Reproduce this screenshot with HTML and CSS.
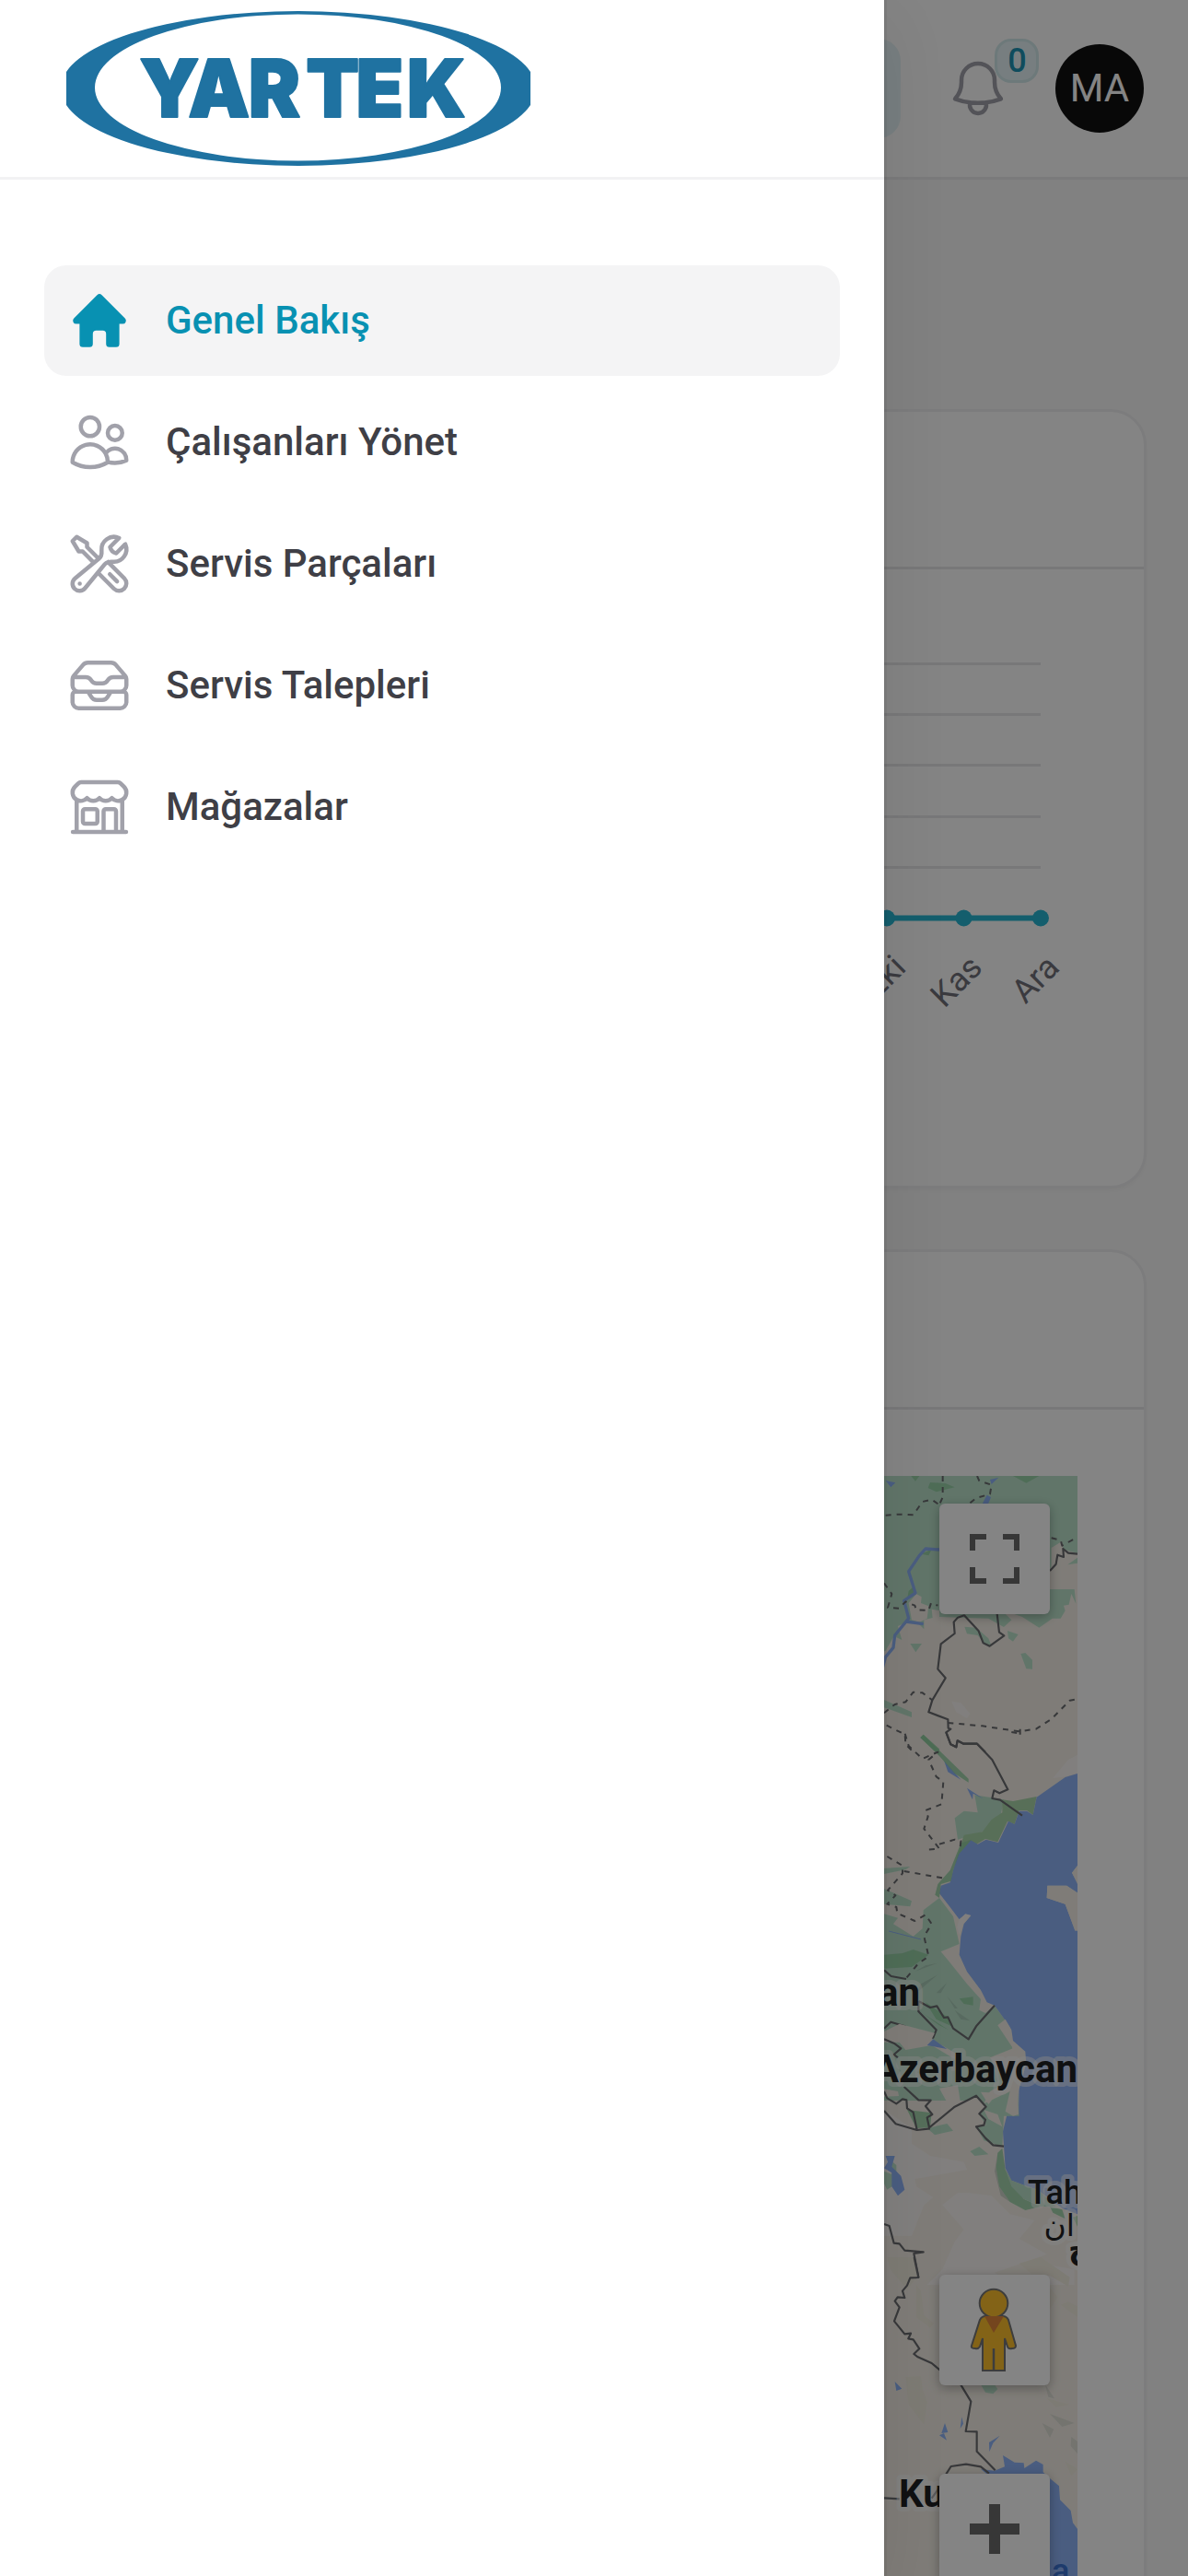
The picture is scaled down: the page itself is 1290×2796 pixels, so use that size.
FILE: index.html
```html
<!DOCTYPE html>
<html lang="tr">
<head>
<meta charset="utf-8">
<title>Yartek</title>
<link rel="stylesheet" href="styles.css">
</head>
<body>
<div class="page">
  <header class="topbar">
    <div class="search"></div>
    <div class="bell">
      <svg class="icon" viewBox="0 0 24 24"><path d="M14.857 17.082a23.848 23.848 0 0 0 5.454-1.31A8.967 8.967 0 0 1 18 9.75V9A6 6 0 0 0 6 9v.75a8.967 8.967 0 0 1-2.312 6.022c1.733.64 3.56 1.085 5.455 1.31m5.714 0a24.255 24.255 0 0 1-5.714 0m5.714 0a3 3 0 1 1-5.714 0"/></svg>
      <span class="badge">0</span>
    </div>
    <div class="avatar">MA</div>
  </header>
  <main class="content">
    <section class="card chart-card">
      <div class="card-head"></div>
      <svg class="chart" viewBox="48 618 1194 669">
        <g class="grid">
          <path d="M200 720.5H1130M200 775.5H1130M200 830.5H1130M200 886.5H1130M200 941.5H1130"/>
        </g>
        <path class="series" d="M200 996.5H1130"/>
        <g class="dots"><circle cx="963" cy="996.5" r="9"/><circle cx="1046.5" cy="996.5" r="9"/><circle cx="1130" cy="996.5" r="9"/></g>
        <g class="months">
          <text transform="translate(985.5 1052) rotate(-45)">Eki</text>
          <text transform="translate(1068.5 1052) rotate(-45)">Kas</text>
          <text transform="translate(1152 1052) rotate(-45)">Ara</text>
        </g>
      </svg>
    </section>
    <section class="card map-card">
      <div class="card-head"></div>
      <div class="map">
        <svg class="map-art" viewBox="120 1602 1050 1200">
          <rect class="land" x="120" y="1602" width="1050" height="1200"/>
          <g transform="translate(940 1500) scale(.33333)">
            <path class="green" d="M0 306H690V558L645 545 638 520 605 540V600L560 690 600 675 680 675 685 722 670 690 662 725 645 728 650 745 635 770 608 770 565 800 510 765 440 740 475 775 450 798 400 770 240 765 240 738 205 725 180 715 205 695 165 690 160 665 210 657 245 670 245 745 215 740 218 768 190 775 190 805 170 785 140 780 105 795 118 840 92 828 65 875 0 900Z"/>
            <path class="land" d="M140 720 165 690 182 700 180 720 205 730 200 770 175 782 150 775Z"/>
            <path class="green" d="M145 852H183L163 880ZM462 810 497 822 480 845 465 835ZM505 885 520 882 543 905V935L523 934ZM322 797 360 800 400 835 410 860 385 850 365 825 330 820ZM658 595 690 572V590ZM60 1035 150 1075V1092L60 1060Z"/>
            <path class="forest" d="M203 345 210 327 260 330 290 343 230 358ZM148 306H175L162 323ZM480 306H565L523 329ZM180 560 215 545 205 565ZM140 680 158 665 165 690 135 708ZM188 1148 240 1195V1215L178 1158Z"/>
            <path class="pale" d="M280 1040 310 1045 340 1080 330 1095 295 1075Z"/>
            <path class="water" d="M65 321 97 328 82 343ZM405 318 433 311 410 333ZM395 368 408 375 398 400 380 397Z"/>
            <path class="river" d="M240 546 195 543 175 565 140 617 162 687 125 712 140 770 95 825 90 865 65 895 55 930M130 780 188 788"/>
            <path class="border" d="M690 560 660 557 643 543 645 570 625 563 620 593 600 615M428 755 435 815 451 826 404 860 383 850 368 811 321 760 300 767 287 782 290 819 245 853 235 935 260 964 217 1036 205 1075 268 1099 269 1127 277 1130 262 1141 277 1180 295 1189 299 1168 319 1178 363 1178 390 1205"/>
            <path class="region" d="M65 434 105 431 155 433 185 390 215 383 240 400M251 306V375L240 400M363 306 370 322 410 335 405 365 360 378 335 398M60 655 85 690 72 735 110 737 130 715 160 728 165 742 205 744 213 720 235 728M605 508 635 515 640 533 690 505M60 1078 95 1050 130 1042 155 1010 185 1012 217 1036M268 1110 380 1120 500 1138 555 1130 605 1098 665 1037 690 1033M503 1130V1150M68 1118 128 1148 130 1180 150 1200"/>
          </g>
          <g transform="translate(940 1880) scale(.33333)">
            <path class="pale" d="M610 150 660 90 690 75V135L650 145Z"/>
            <path class="green" d="M355 205 450 220 440 270 380 325 300 350 290 280 320 257 365 262ZM0 448 145 438 130 448 60 462ZM60 510 150 550 145 568 60 560ZM60 592 105 605 90 625 155 665 185 640 188 580 240 540 285 600 305 690 245 715 270 745 330 820 375 870 370 905 390 915 420 890 470 960 480 1050 520 1080 380 1200 0 1200V592Z"/>
            <path class="meadow" d="M445 220 480 225 557 210 545 270 525 255H500L485 300 462 290 430 358 390 348 345 375 300 400 320 335 380 325 410 285 445 262Z"/>
            <path class="water" d="M690 135 650 147 557 212 545 270 525 257H500L485 300 465 290 432 360 392 350 365 365 342 352 318 380 300 400 285 450 275 490 245 500 240 525 275 570 305 610 325 595 343 597 320 625 310 665 305 725 330 780 375 840 395 880 420 890 470 960 477 1020 510 1055 520 1100H690V1200 645L682 645 650 560 590 540 592 500H655L690 523V490L672 458 690 435ZM255 92 310 155 268 130ZM330 182 385 218 350 200 348 220Z"/>
            <path class="land" d="M690 435 672 458 690 495ZM592 500H655L690 525V647H682L650 560 590 540Z"/>
            <path class="pale" d="M305 610 325 592 343 597 318 625 305 660 298 635Z"/>
            <path class="forest" d="M188 8 240 60 335 152V164L290 135 240 78 178 18ZM345 350 310 362 295 400 275 450 235 495 226 530 240 540 245 495 278 485 285 450 305 395ZM60 725 120 720 155 708 205 725 150 765 60 770ZM195 880 270 930 285 960 230 935ZM305 868 350 862 350 890 320 885Z"/>
            <path class="shade" d="M165 850 235 790 180 820ZM160 780 235 752 195 760ZM230 850 265 815 245 850ZM265 860 300 900 290 900ZM290 905 340 940 310 935Z"/>
            <path class="border" d="M262 0 277 40 295 49 299 28 319 38 363 38 412 90 463 187 436 199 418 190 412 216 438 221 510 272M60 775 83 795 132 804M420 890 360 958 335 1000 285 965 268 928 255 930 232 892 210 897 172 876M172 876V910L230 970 220 995 130 975 128 958 82 944 60 965"/>
            <path class="region" d="M128 5 140 45 185 87 235 65 205 90 230 145 253 162 247 235 195 255 203 275 190 315 240 380 200 383M240 365 290 350 310 355 308 375M70 405 120 435 120 460 72 515 97 532 70 560 100 570 103 590 160 615 195 595 215 625 190 665 205 730 170 755 130 804M125 453 250 475M475 0 503 5"/>
            <path class="stream" d="M75 648 180 675"/>
          </g>
          <g transform="translate(940 2180) scale(.33333)">
            <path class="water" d="M400-60H690V670L640 650 560 590 515 575 475 560 455 520 447 400 462 340 498 348 500 240 490 110 470 60Z"/>
            <path class="land" d="M0 340 60 330 130 375 170 395 210 390 360 283 450 450 430 500 430 560 460 620 530 655 575 650 690 690V1200H0Z"/>
            <path class="pale" d="M60 330 150 390 150 440 210 480 320 500 330 525 160 555 165 580 220 615 190 640 150 740 60 740ZM330 600 410 610 470 670 550 690 500 750 590 800 420 860 480 900H200L250 850 290 760 320 720 250 640 300 600ZM570 830 680 850V900H560Z"/>
            <path class="green" d="M200 390 265 375 285 398 225 412ZM360 283 390 320 370 345 392 380 360 385 385 430 445 450 450 350 500 350 495 270 300 270ZM340 465 370 450 400 475 355 480Z"/>
            <path class="land" d="M60 75 110 50 225 80 215 100 300 150 290 165 215 120 130 135 110 110 60 110ZM430 55 455 35 475 70 480 105 520 140 523 180 495 280 498 345 480 350 455 335 470 270 385 310 405 270 460 240 405 160 480 130ZM240 260 300 250 310 315 280 325 265 305ZM60 262 105 270 108 285 60 287ZM385 330 430 345 445 385 400 360ZM375 272 430 275 400 312Z"/>
            <path class="forest" d="M185 15 270 70 240 55ZM135 330 215 340 210 388 165 390ZM445 455 455 525 475 560 515 620 570 645 520 657 470 630 435 580 425 520 430 470ZM600 645 640 655 650 685 610 665ZM675 680 690 675V710Z"/>
            <path class="green" d="M455 525 475 560 515 575 560 590 620 645 570 645 515 620 475 580ZM60 530 85 540 75 490 100 510 100 570 70 590 60 570Z"/>
            <path class="water" d="M200 120 220 100 265 132ZM65 480H95L85 515 115 545 127 590 105 610 85 580 85 535 60 520 72 500Z"/>
            <path class="shade" d="M430 470 425 520 435 580 470 630 440 610 420 530Z"/>
            <path class="border" d="M60 100 95 115 115 130 92 150 105 160M125 255 172 298 212 299 195 318 217 345 200 355 207 388 290 320 360 284 392 320 370 343 390 362 385 380 360 385 390 422 415 445 450 449M60 270 70 292 100 310 120 295 133 298 135 325 155 338 167 395M60 333 98 376 167 396 210 391M60 702 77 708 92 764 110 766 127 788 188 793 157 798 172 875 145 878 133 900"/>
          </g>
          <g transform="translate(940 2450) scale(.33333)">
            <path class="sand" d="M70 0H155L170 60 135 105 80 40ZM165 90 180 110 190 190 222 215 210 230 165 195ZM130 390 180 388 185 430 200 470 190 545 140 480ZM500 20 570 0 665 65 660 95 600 60 540 55ZM635 155 660 145 690 160V195ZM600 100 625 130 600 170ZM590 460 665 480 620 488ZM650 665 690 690 670 712Z"/>
            <path class="shade faint" d="M600 510 680 540 640 552ZM575 540 613 560 600 588ZM670 585 690 600V640L668 615ZM585 415 615 460 595 455Z"/>
            <path class="green" d="M375 415H420L430 430 415 445 390 440Z"/>
            <path class="water" d="M375 690 420 695 453 682 447 645 485 668 515 670 517 687 555 662 578 675V700L600 720 630 745 633 790 668 825 675 865 690 885V1100H560V710H400ZM95 405 118 428 100 435ZM258 540 268 570 247 573ZM240 580 255 573 264 596ZM313 520 318 542 308 558ZM402 603 437 581 415 605 403 633Z"/>
            <path class="border" d="M158 0 172 66 145 67 135 92 120 110 127 132 104 130 95 143 110 163 93 208 127 250 147 248 139 265 155 268 175 298 157 315 170 325 215 345 245 370M308 412 343 470 326 567 362 568V632L422 694M262 706 278 681 327 674 375 682 402 704M60 784 110 787M215 785 240 750"/>
          </g>
          <g class="place">
            <text x="999" y="2177" text-anchor="end">an</text>
            <text x="1170" y="2260" text-anchor="end">Azerbaycan</text>
            <text x="976" y="2721">Ku</text>
          </g>
          <g class="town">
            <text x="1116" y="2392">Tah</text>
            <text class="arabic" x="1167" y="2427" text-anchor="end">ان</text>
            <text class="arabic heavy" x="1160" y="2452">ج</text>
          </g>
          <text class="gulf" x="1142" y="2803">a K</text>
        </svg>
        <div class="control control-full">
          <svg viewBox="0 0 18 18"><path d="M0 0v6h2V2h4V0zM16 0h-4v2h4v4h2V0zM16 16h-4v2h6v-6h-2zM2 12H0v6h6v-2H2z"/></svg>
        </div>
        <div class="control control-person">
          <svg class="person" viewBox="0 0 52 92">
            <g class="body"><path d="M11 35Q13 31 17 31H36Q40 31 42 35L50 63Q50 66 46 66 42 67 41 64L38 55V90H14V55L11 64Q9 67 6 66 1 66 2 63Z"/><circle cx="26" cy="17" r="15.3"/></g>
            <path class="scarf" d="M16 31H37L26 49Z"/><path class="leg" d="M26 66V90"/>
          </svg>
        </div>
        <div class="control control-zoom">
          <svg viewBox="0 0 18 18"><path d="M7 0h4v7h7v4h-7v7H7v-7H0V7h7z"/></svg>
        </div>
      </div>
    </section>
  </main>
</div>
<div class="overlay"></div>
<aside class="drawer">
  <div class="brand">
    <svg class="logo" viewBox="72 12 504 168">
      <path fill-rule="evenodd" d="M66 96A258 84 0 0 1 582 96A258 84 0 0 1 66 96ZM103 95A220.5 79.5 0 0 0 544 95A220.5 79.5 0 0 0 103 95Z"/>
      <text transform="scale(.97 1)" x="156 210.5 278 342.5 398.5 455.5" y="127">YARTEK</text>
    </svg>
  </div>
  <nav class="menu">
    <a class="item active"><svg class="icon" viewBox="0 0 20 20"><path d="M9.293 2.293a1 1 0 011.414 0l7 7A1 1 0 0117 11h-1v6a1 1 0 01-1 1h-2a1 1 0 01-1-1v-3a1 1 0 00-1-1H9a1 1 0 00-1 1v3a1 1 0 01-1 1H5a1 1 0 01-1-1v-6H3a1 1 0 01-.707-1.707l7-7z"/></svg><span>Genel Bakış</span></a>
    <a class="item"><svg class="icon" viewBox="0 0 24 24"><path d="M15 19.128a9.38 9.38 0 0 0 2.625.372 9.337 9.337 0 0 0 4.121-.952 4.125 4.125 0 0 0-7.533-2.493M15 19.128v-.003c0-1.113-.285-2.16-.786-3.07M15 19.128v.106A12.318 12.318 0 0 1 8.624 21c-2.331 0-4.512-.645-6.374-1.766l-.001-.109a6.375 6.375 0 0 1 11.964-3.07M12 6.375a3.375 3.375 0 1 1-6.75 0 3.375 3.375 0 0 1 6.75 0Zm8.25 2.25a2.625 2.625 0 1 1-5.25 0 2.625 2.625 0 0 1 5.25 0Z"/></svg><span>Çalışanları Yönet</span></a>
    <a class="item"><svg class="icon" viewBox="0 0 24 24"><path d="M11.42 15.17 17.25 21A2.652 2.652 0 0 0 21 17.25l-5.877-5.877M11.42 15.17l2.496-3.03c.317-.384.74-.626 1.208-.766M11.42 15.17l-4.655 5.653a2.548 2.548 0 1 1-3.586-3.586l6.837-5.63m5.108-.233c.55-.164 1.163-.188 1.743-.14a4.5 4.5 0 0 0 4.486-6.336l-3.276 3.277a3.004 3.004 0 0 1-2.25-2.25l3.276-3.276a4.5 4.5 0 0 0-6.336 4.486c.091 1.076-.071 2.264-.904 2.95l-.102.085m-1.745 1.437L5.909 7.5H4.5L2.25 3.75l1.5-1.5L7.5 4.5v1.409l4.26 4.26m-1.745 1.437 1.745-1.437m6.615 8.206L15.75 15.75M4.867 19.125h.008v.008h-.008v-.008Z"/></svg><span>Servis Parçaları</span></a>
    <a class="item"><svg class="icon" viewBox="0 0 24 24"><path d="m7.875 14.25 1.214 1.942a2.25 2.25 0 0 0 1.908 1.058h2.006c.776 0 1.497-.4 1.908-1.058l1.214-1.942M2.41 9h4.636a2.25 2.25 0 0 1 1.872 1.002l.164.246a2.25 2.25 0 0 0 1.872 1.002h2.092a2.25 2.25 0 0 0 1.872-1.002l.164-.246A2.25 2.25 0 0 1 16.954 9h4.636M2.41 9a2.25 2.25 0 0 0-.16.832V12a2.25 2.25 0 0 0 2.25 2.25h15A2.25 2.25 0 0 0 21.75 12V9.832c0-.287-.055-.57-.16-.832M2.41 9a2.25 2.25 0 0 1 .382-.632l3.285-3.832a2.25 2.25 0 0 1 1.708-.786h8.43c.657 0 1.281.287 1.709.786l3.284 3.832c.163.19.291.404.382.632M4.5 20.25h15A2.25 2.25 0 0 0 21.75 18v-2.625c0-.621-.504-1.125-1.125-1.125H3.375c-.621 0-1.125.504-1.125 1.125V18a2.25 2.25 0 0 0 2.25 2.25Z"/></svg><span>Servis Talepleri</span></a>
    <a class="item"><svg class="icon" viewBox="0 0 24 24"><path d="M13.5 21v-7.5a.75.75 0 0 1 .75-.75h3a.75.75 0 0 1 .75.75V21m-4.5 0H2.36m11.14 0H18m0 0h3.64m-1.39 0V9.349M3.75 21V9.349m0 0a3.001 3.001 0 0 0 3.75-.615A2.993 2.993 0 0 0 9.75 9.75c.896 0 1.7-.393 2.25-1.016a2.993 2.993 0 0 0 2.25 1.016c.896 0 1.7-.393 2.25-1.015a3.001 3.001 0 0 0 3.75.614m-16.5 0a3.004 3.004 0 0 1-.621-4.72l1.189-1.19A1.5 1.5 0 0 1 5.378 3h13.243a1.5 1.5 0 0 1 1.06.44l1.19 1.189a3 3 0 0 1-.621 4.72M6.75 18h3.75a.75.75 0 0 0 .75-.75V13.5a.75.75 0 0 0-.75-.75H6.75a.75.75 0 0 0-.75.75v3.75c0 .414.336.75.75.75Z"/></svg><span>Mağazalar</span></a>
  </nav>
</aside>
</body>
</html>
```
FILE: styles.css
```css
* { box-sizing: border-box; }
body { margin: 0; height: 2796px; overflow: hidden; position: relative; background: #fafafa; font-family: Roboto, "Liberation Sans", sans-serif; }
svg { display: block; }
.page { height: 2796px; overflow: hidden; }
.icon { width: 72px; height: 72px; flex: none; fill: none; stroke: #a1a1aa; stroke-width: 1.5; stroke-linecap: round; stroke-linejoin: round; }

/* top bar */
.topbar { height: 195px; padding-right: 48px; display: flex; align-items: center; justify-content: flex-end; gap: 48px; background: #fff; border-bottom: 3px solid #ececed; }
.search { width: 420px; height: 108px; border-radius: 24px; background: #e6f4f7; }
.bell { position: relative; }
.badge { position: absolute; left: 54px; top: -18px; width: 48px; height: 48px; border: 3px solid #d3e9ec; border-radius: 18px; background: #e6f4f7; color: #1e93b4; font-size: 36px; font-weight: 500; line-height: 42px; padding-left: 1px; text-align: center; }
.avatar { width: 96px; height: 96px; border-radius: 50%; background: #111; color: #fff; font-size: 42px; line-height: 96px; text-align: center; }

/* cards */
.content { display: flex; flex-direction: column; gap: 66px; padding: 249px 45px 0; }
.card { border: 3px solid #f0f0f1; border-radius: 39px; background: #fff; box-shadow: 0 3px 4px rgba(0,0,0,.03); flex: none; }
.chart-card { height: 846px; }
.map-card { height: 1560px; }
.card-head { height: 171px; border-bottom: 3px solid #e7e7e9; }
.chart { width: 1194px; height: 669px; }
.grid path { fill: none; stroke: #e7e7e9; stroke-width: 3; }
.series { stroke: #27b6d2; stroke-width: 6; }
.dots { fill: #27b6d2; }
.months { font-size: 36px; fill: #71717a; text-anchor: end; }

/* map */
.map { position: relative; width: 1050px; height: 1200px; margin: 72px 72px 0; overflow: hidden; }
.map-art { width: 1050px; height: 1200px; }
.land { fill: #f5f0e8; }
.pale { fill: #faf6f4; }
.sand { fill: #f2ede0; }
.green { fill: #bce3cc; }
.meadow { fill: #abd6ab; }
.forest { fill: #90cea0; opacity: .8; }
.shade { fill: #8aa295; opacity: .35; }
.faint { opacity: .2; }
.water { fill: #8fb4f7; }
.river, .stream, .border, .region { fill: none; stroke-linejoin: round; }
.river { stroke: #8fb4f7; stroke-width: 10; }
.stream { stroke: #8fb4f7; stroke-width: 3; }
.border { stroke: #6b6c70; stroke-width: 6.5; }
.region { stroke: #6b6c70; stroke-width: 6; stroke-dasharray: 18 18; }
.place text, .town text { paint-order: stroke; stroke: rgba(255,255,255,.5); stroke-width: 10px; stroke-linejoin: round; }
.place { font-size: 42px; font-weight: 700; fill: #202124; }
.town { font-size: 36px; font-weight: 500; fill: #202124; }
.town .arabic { font-family: "DejaVu Sans", sans-serif; font-size: 33px; font-weight: 400; }
.town .heavy { font-weight: 700; }
.gulf { font-size: 36px; font-weight: 500; fill: #3b73d1; }
.control { position: absolute; right: 30px; width: 120px; height: 120px; border-radius: 6px; background: #fff; box-shadow: 0 3px 12px rgba(0,0,0,.3); display: flex; align-items: center; justify-content: center; }
.control svg { width: 54px; height: 54px; fill: #6a6a6a; }
.control-full { top: 30px; }
.control-person { top: 867px; }
.control-zoom { top: 1083px; }
.control .person { width: 52px; height: 92px; margin-right: 3px; }
.person .body { fill: #fdbf2d; stroke: #777; stroke-width: 2; }
.person .scarf { fill: #e1863b; }
.person .leg { stroke: #777; stroke-width: 2.5; }

.overlay { position: absolute; inset: 0; background: rgba(0,0,0,.483); }

/* navigation drawer */
.drawer { position: absolute; top: 0; left: 0; width: 960px; height: 2796px; background: #fff; box-shadow: 0 0 0 3px rgba(24,24,27,.07), 0 24px 72px rgba(0,0,0,.08); }
.brand { height: 195px; padding: 12px 72px; border-bottom: 3px solid #f2f2f3; }
.logo { width: 504px; height: 168px; fill: #1f72a1; }
.logo text { font-family: Inter, sans-serif; font-size: 87px; font-weight: 900; stroke: #1f72a1; stroke-width: 2px; stroke-linejoin: round; }
.menu { display: flex; flex-direction: column; gap: 12px; padding: 93px 48px; }
.item { display: flex; align-items: center; gap: 36px; height: 120px; padding: 0 24px; border-radius: 24px; color: #3f3f46; font-size: 42px; font-weight: 500; }
.item span { padding-bottom: 2px; }
.active { background: #f4f4f5; color: #0891b2; }
.active .icon { fill: #0891b2; stroke: none; }
```
